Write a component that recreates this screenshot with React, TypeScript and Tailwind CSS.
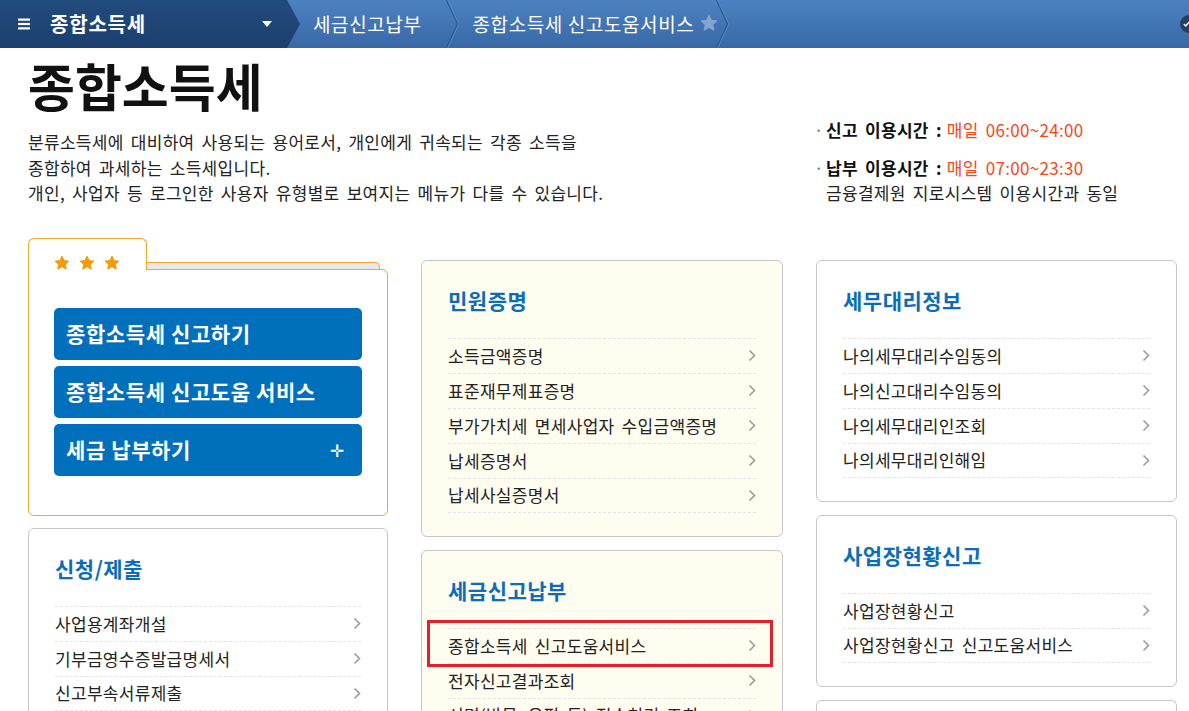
import { ReactNode } from "react";

type Item = { label: string; highlight?: boolean };

const Chevron = () => (
  <svg width="8" height="13" viewBox="0 0 8 13" className="shrink-0">
    <path d="M1.5 1.5l5 5-5 5" fill="none" stroke="#9c9c9c" strokeWidth="1.6" />
  </svg>
);

const Star = ({ color, size = 16 }: { color: string; size?: number }) => (
  <svg width={size} height={size} viewBox="0 0 24 24">
    <path
      d="M12 1.8l3.1 6.6 7.1.8-5.3 4.9 1.5 7.1L12 17.6l-6.4 3.6 1.5-7.1L1.8 9.2l7.1-.8z"
      fill={color}
      stroke={color}
      strokeWidth="1.5"
      strokeLinejoin="round"
    />
  </svg>
);

const Sep = () => (
  <svg width="14" height="48" viewBox="0 0 14 48" className="shrink-0">
    <path d="M1 -1L12.5 24L1 49" fill="none" stroke="#2c5a93" strokeWidth="1.3" />
    <path d="M2.3 -1L13.8 24L2.3 49" fill="none" stroke="#5a8dca" strokeWidth="0.8" />
  </svg>
);

const body = "text-[17px] tracking-[0.3px] [word-spacing:3px]";

const MenuCard = ({
  title,
  items,
  cream,
}: {
  title: string;
  items: Item[];
  cream?: boolean;
}) => (
  <div
    className={`rounded-[6px] border border-[#c6c6c6] px-[26px] pt-[24px] pb-[23px] ${
      cream ? "bg-[#fffdf0]" : "bg-white"
    }`}
  >
    <h3 className="text-[21px] tracking-[0.5px] leading-[30px] font-bold text-[#0b6db7] mb-[23px]">{title}</h3>
    <ul>
      {items.map((it) => (
        <li
          key={it.label}
          className={`relative h-[35px] flex items-center justify-between border-t border-dashed border-[#e3e3e3] last:border-b text-[#222] ${body}`}
        >
          <span>{it.label}</span>
          <Chevron />
          {it.highlight && (
            <div className="absolute -left-[21px] -right-[17px] -top-[9px] -bottom-[4px] border-[3px] border-[#e5202a]" />
          )}
        </li>
      ))}
    </ul>
  </div>
);

const BlueButton = ({ children, plus }: { children: ReactNode; plus?: boolean }) => (
  <div className="h-[52px] rounded-[5px] bg-[#0070bd] flex items-center justify-between pl-[12px] pr-[17px] text-white text-[21px] tracking-[0.6px] font-bold">
    <span>{children}</span>
    {plus && <span className="text-[17px] font-normal">✛</span>}
  </div>
);

export default function App() {
  return (
    <div className="min-h-screen bg-white font-['Noto_Sans_CJK_KR','Noto_Sans',sans-serif] text-[#222] overflow-hidden">
      {/* top nav */}
      <nav className="h-[48px] flex items-center overflow-hidden bg-gradient-to-b from-[#4c82c2] to-[#3968a6]">
        <div className="h-full w-[300px] shrink-0 bg-gradient-to-b from-[#224b7e] to-[#1c3f6d] [clip-path:polygon(0_0,287px_0,300px_24px,287px_48px,0_48px)] flex items-center pl-[18px] pr-[28px] text-white">
          <svg width="12" height="12" viewBox="0 0 12 12" className="mr-[20px]">
            <rect x="0" y="0.5" width="12" height="2.2" fill="#fff" />
            <rect x="0" y="4.9" width="12" height="2.2" fill="#fff" />
            <rect x="0" y="9.3" width="12" height="2.2" fill="#fff" />
          </svg>
          <span className="text-[20px] tracking-[0.8px] font-bold">종합소득세</span>
          <svg width="10" height="6" viewBox="0 0 10 6" className="ml-auto">
            <path d="M0 0h10L5 6z" fill="#fff" />
          </svg>
        </div>
        <span className="ml-[13px] text-[19px] tracking-[0.6px] text-white">세금신고납부</span>
        <div className="ml-[24px]">
          <Sep />
        </div>
        <span className="ml-[13px] text-[19px] tracking-[0.6px] text-white">종합소득세 신고도움서비스</span>
        <span className="ml-[6px] mt-[-2px]">
          <Star color="#86a5cd" size={18} />
        </span>
        <div className="ml-[-3px]">
          <Sep />
        </div>
        <div className="ml-auto mr-[-9px] w-[18px] h-[18px] rounded-full bg-[#223f68] flex items-center justify-start pl-[3px]">
          <svg width="7" height="6" viewBox="0 0 7 6">
            <path d="M0.8 3l2 2L6.2 1" fill="none" stroke="#fff" strokeWidth="1.4" />
          </svg>
        </div>
      </nav>

      {/* header */}
      <div className="flex px-[28px]">
        <div className="w-[786px] shrink-0">
          <h1 className="mt-[10px] text-[51px] leading-[54px] font-bold text-[#111]">종합소득세</h1>
          <p className={`mt-[17px] leading-[25.5px] text-[#222] ${body}`}>
            분류소득세에 대비하여 사용되는 용어로서, 개인에게 귀속되는 각종 소득을
            <br />
            종합하여 과세하는 소득세입니다.
            <br />
            개인, 사업자 등 로그인한 사용자 유형별로 보여지는 메뉴가 다를 수 있습니다.
          </p>
        </div>
        <div className={`pt-[69px] leading-[25px] ${body}`}>
          <div className="flex">
            <span className="w-[12px] text-[#777]">·</span>
            <span className="font-bold text-[#111]">신고 이용시간 :</span>
            <span className="ml-[5px] text-[#ff4414]">매일 06:00~24:00</span>
          </div>
          <div className="flex mt-[13px]">
            <span className="w-[12px] text-[#777]">·</span>
            <span className="font-bold text-[#111]">납부 이용시간 :</span>
            <span className="ml-[5px] text-[#ff4414]">매일 07:00~23:30</span>
          </div>
          <div className="pl-[12px]">금융결제원 지로시스템 이용시간과 동일</div>
        </div>
      </div>

      {/* columns */}
      <div className="flex gap-[33px] px-[28px] mt-[32px] items-start">
        <div className="w-[360px] shrink-0 flex flex-col gap-[12px]">
          <div className="relative">
            <div className="relative z-10 w-[119px] h-[32px] -mb-px bg-white border border-b-0 border-[#f5a623] rounded-t-[6px] flex items-start gap-[9px] pl-[25px] pt-[16px]">
              <Star color="#f59a00" />
              <Star color="#f59a00" />
              <Star color="#f59a00" />
            </div>
            <div className="absolute left-[118px] top-[24px] w-[234px] h-[7px] bg-[#e9e9e9] border-t border-r border-[#f5a623] rounded-tr-[5px]" />
            <div className="bg-white border border-[#f5a623] rounded-b-[6px] rounded-tr-[6px] px-[25px] pt-[38px] pb-[39px] flex flex-col gap-[6px]">
              <BlueButton>종합소득세 신고하기</BlueButton>
              <BlueButton>종합소득세 신고도움 서비스</BlueButton>
              <BlueButton plus>세금 납부하기</BlueButton>
            </div>
          </div>
          <MenuCard
            title="신청/제출"
            items={[
              { label: "사업용계좌개설" },
              { label: "기부금영수증발급명세서" },
              { label: "신고부속서류제출" },
            ]}
          />
        </div>

        <div className="w-[362px] shrink-0 pt-[22px] flex flex-col gap-[13px]">
          <MenuCard
            cream
            title="민원증명"
            items={[
              { label: "소득금액증명" },
              { label: "표준재무제표증명" },
              { label: "부가가치세 면세사업자 수입금액증명" },
              { label: "납세증명서" },
              { label: "납세사실증명서" },
            ]}
          />
          <MenuCard
            cream
            title="세금신고납부"
            items={[
              { label: "종합소득세 신고도움서비스", highlight: true },
              { label: "전자신고결과조회" },
              { label: "서면(방문·우편 등) 접수처리 조회" },
            ]}
          />
        </div>

        <div className="w-[361px] shrink-0 pt-[22px] flex flex-col gap-[13px]">
          <MenuCard
            title="세무대리정보"
            items={[
              { label: "나의세무대리수임동의" },
              { label: "나의신고대리수임동의" },
              { label: "나의세무대리인조회" },
              { label: "나의세무대리인해임" },
            ]}
          />
          <MenuCard
            title="사업장현황신고"
            items={[{ label: "사업장현황신고" }, { label: "사업장현황신고 신고도움서비스" }]}
          />
          <div className="h-[40px] rounded-t-[6px] border border-b-0 border-[#c6c6c6] bg-white" />
        </div>
      </div>
    </div>
  );
}
